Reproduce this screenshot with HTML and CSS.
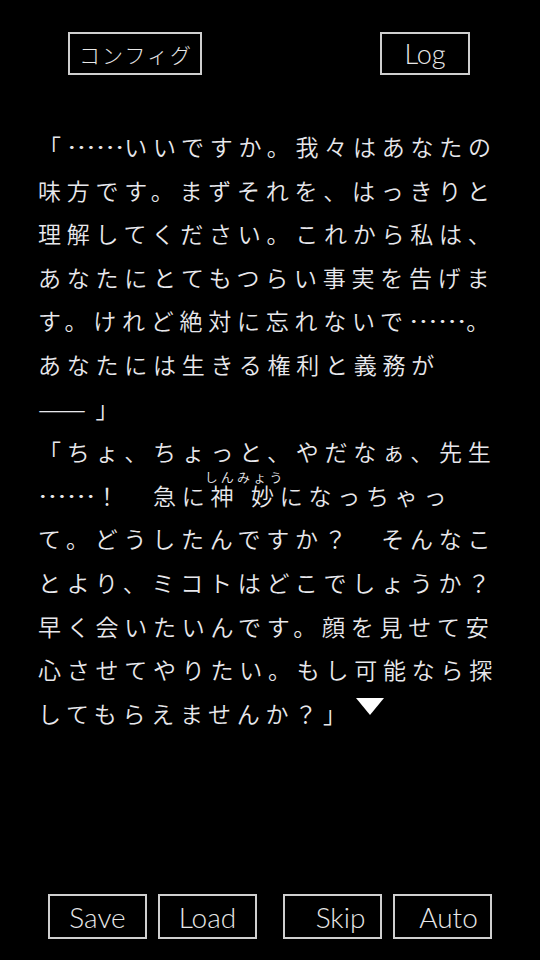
FILE: index.html
```html
<!DOCTYPE html>
<html lang="ja">
<head>
    <meta charset="UTF-8">
    <meta name="viewport" content="width=device-width, initial-scale=1.0">
    <title>ノベル</title>
    <link rel="stylesheet" href="styles.css">
</head>
<body>
    <div class="screen">
        <div class="top-bar">
            <button class="btn btn-config">コンフィグ</button>
            <button class="btn btn-log">Log</button>
        </div>

        <div class="message">
            <p class="line">「<span class="dots"><span>……</span></span>いいですか。我々はあなたの<br>味方です。まずそれを、はっきりと<br>理解してください。これから私は、<br>あなたにとてもつらい事実を告げま<br>す。けれど絶対に忘れないで<span class="dots"><span>……</span></span>。<br>あなたには生きる権利と義務が<br><span class="dots"><span>——</span></span>」</p>
            <p class="line">「ちょ、ちょっと、やだなぁ、先生<br><span class="dots"><span>……</span></span>！　急に<ruby>神妙<rt>しんみょう</rt></ruby>になっちゃっ<br>て。どうしたんですか？　そんなこ<br>とより、ミコトはどこでしょうか？<br>早く会いたいんです。顔を見せて安<br>心させてやりたい。もし可能なら探<br>してもらえませんか？」<span class="next-mark"></span></p>
        </div>

        <div class="bottom-bar">
            <button class="btn btn-menu">Save</button>
            <button class="btn btn-menu">Load</button>
            <button class="btn btn-menu btn-skip">Skip</button>
            <button class="btn btn-menu btn-auto">Auto</button>
        </div>
    </div>
</body>
</html>
```

FILE: styles.css
```css
* {
    margin: 0;
    padding: 0;
    box-sizing: border-box;
}

body {
    background: #000;
    font-family: "Noto Sans CJK JP", "Noto Sans", sans-serif;
    color: #e8e8ec;
}

.screen {
    width: 540px;
    height: 960px;
    display: flex;
    flex-direction: column;
}

.btn {
    background: #000;
    color: #e8e8e8;
    border: 2px solid #cfcfcf;
    font-family: "Noto Sans CJK JP", "Noto Sans", sans-serif;
    font-weight: 300;
    cursor: pointer;
}

.top-bar {
    display: flex;
    justify-content: space-between;
    padding: 32px 70px 0 68px;
}

.btn-config {
    width: 134px;
    height: 43px;
    font-size: 21px;
    letter-spacing: 2px;
    padding-left: 2px;
}

.btn-log {
    width: 90px;
    height: 43px;
    font-family: Lato, "Noto Sans", sans-serif;
    font-size: 27px;
}

.message {
    flex: 1;
    padding: 50px 0 0 38px;
}

.line {
    font-size: 23px;
    font-weight: 350;
    line-height: 43.6px;
    letter-spacing: 5.75px;
    white-space: nowrap;
}

/* 三点リーダー・ダッシュは途切れないように2マス分に伸ばす */
.dots {
    display: inline-block;
    width: 57.5px;
}

.dots span {
    display: inline-block;
    letter-spacing: 0;
    transform: scaleX(1.25);
    transform-origin: left center;
}

.line rt {
    font-size: 13px;
    letter-spacing: 3.2px;
}

.next-mark {
    display: inline-block;
    width: 0;
    height: 0;
    margin-left: 4px;
    border-left: 14px solid transparent;
    border-right: 14px solid transparent;
    border-top: 17px solid #fff;
    vertical-align: 8px;
}

.bottom-bar {
    display: flex;
    gap: 11px;
    padding: 0 0 21px 48px;
}

.btn-menu {
    width: 99px;
    height: 45px;
    font-family: Lato, "Noto Sans", sans-serif;
    font-size: 28px;
}

.btn-skip {
    margin-left: 15px;
    padding-left: 16px;
}

.btn-auto {
    padding-left: 12px;
}
```
